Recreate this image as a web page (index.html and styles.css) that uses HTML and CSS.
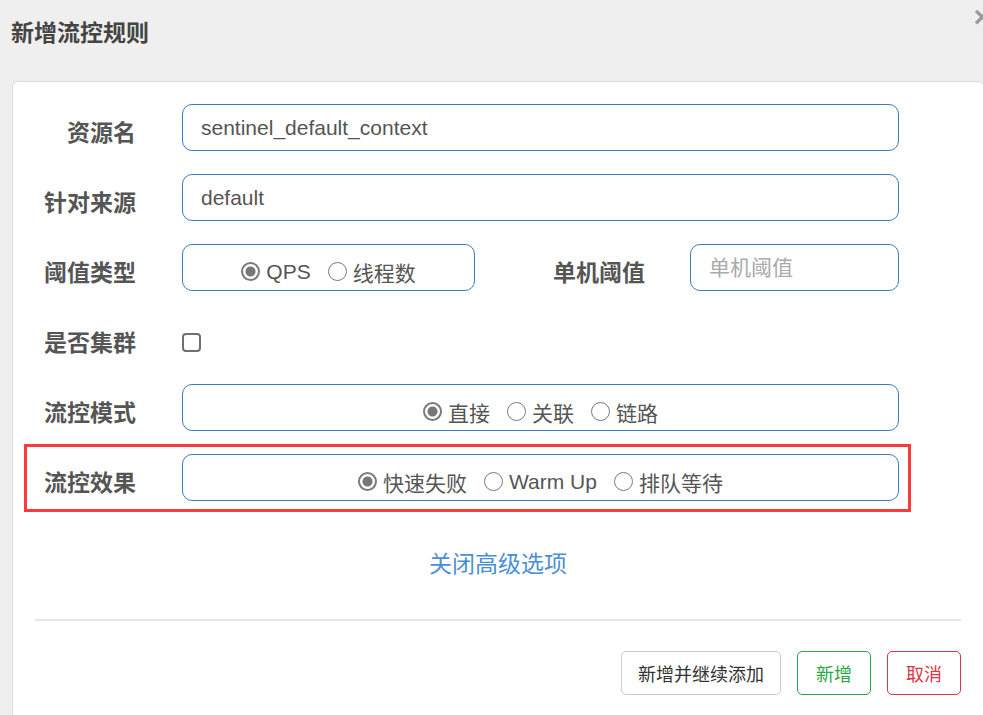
FILE: index.html
```html
<!DOCTYPE html>
<html lang="zh-CN">
<head>
<meta charset="utf-8">
<title>新增流控规则</title>
<link rel="stylesheet" href="styles.css">
</head>
<body>
<div class="modal">
  <div class="modal-header">
    <h4 class="modal-title">新增流控规则</h4>
    <span class="close">×</span>
  </div>
  <div class="card">
    <form class="form">
      <div class="row">
        <label class="label">资源名</label>
        <input class="input" type="text" value="sentinel_default_context">
      </div>
      <div class="row">
        <label class="label">针对来源</label>
        <input class="input" type="text" value="default">
      </div>
      <div class="row">
        <label class="label">阈值类型</label>
        <div class="split">
          <div class="radio-box">
            <label class="radio"><input type="radio" name="grade" checked><span>QPS</span></label>
            <label class="radio"><input type="radio" name="grade"><span>线程数</span></label>
          </div>
          <label class="label">单机阈值</label>
          <input class="input" type="text" placeholder="单机阈值">
        </div>
      </div>
      <div class="row">
        <label class="label">是否集群</label>
        <div class="check-wrap"><input class="checkbox" type="checkbox"></div>
      </div>
      <div class="row">
        <label class="label">流控模式</label>
        <div class="radio-box">
          <label class="radio"><input type="radio" name="strategy" checked><span>直接</span></label>
          <label class="radio"><input type="radio" name="strategy"><span>关联</span></label>
          <label class="radio"><input type="radio" name="strategy"><span>链路</span></label>
        </div>
      </div>
      <div class="row row-highlight">
        <label class="label">流控效果</label>
        <div class="radio-box">
          <label class="radio"><input type="radio" name="behavior" checked><span>快速失败</span></label>
          <label class="radio"><input type="radio" name="behavior"><span>Warm Up</span></label>
          <label class="radio"><input type="radio" name="behavior"><span>排队等待</span></label>
        </div>
      </div>
    </form>
    <div class="advanced"><a class="link">关闭高级选项</a></div>
    <hr class="divider">
    <div class="footer">
      <button class="btn btn-default" type="button">新增并继续添加</button>
      <button class="btn btn-success" type="button">新增</button>
      <button class="btn btn-danger" type="button">取消</button>
    </div>
  </div>
</div>
</body>
</html>
```
FILE: styles.css
```css
html, body {
  margin: 0;
  padding: 0;
  height: 100%;
  overflow: hidden;
}
body {
  background: #efefef;
  font-family: "Liberation Sans", "Noto Sans CJK SC", sans-serif;
  color: #555;
}
.modal {
  width: 983px;
}
.modal-header {
  height: 81px;
  display: flex;
  justify-content: space-between;
  align-items: flex-start;
  padding-left: 11px;
  box-sizing: border-box;
}
.modal-title {
  margin: 17px 0 0 0;
  font-size: 23px;
  line-height: 32px;
  font-weight: bold;
  color: #444;
}
.close {
  margin-top: 2px;
  margin-right: -8px;
  font-size: 30px;
  line-height: 30px;
  font-weight: bold;
  color: #9a9a9a;
}
.card {
  margin-left: 12px;
  width: 926px;
  padding: 22px 22px 40px 22px;
  background: #fff;
  border: 1px solid #dcdcdc;
  border-radius: 6px 6px 0 0;
}
.form {
  display: flex;
  flex-direction: column;
  gap: 23px;
  margin: 0;
}
.row {
  display: grid;
  grid-template-columns: 101px 717px;
  column-gap: 46px;
  height: 47px;
  align-items: center;
}
.label {
  text-align: right;
  font-size: 23px;
  font-weight: bold;
  color: #555;
  padding-top: 6px;
  white-space: nowrap;
}
.input {
  box-sizing: border-box;
  width: 100%;
  height: 47px;
  border: 1px solid #3a7cbd;
  border-radius: 10px;
  padding: 0 18px;
  font-family: "Liberation Sans", "Noto Sans CJK SC", sans-serif;
  font-size: 21px;
  color: #555;
  background: #fff;
  outline: none;
}
.input::placeholder {
  color: #aaa;
}
.split {
  display: grid;
  grid-template-columns: 293px 170px 254px;
  align-items: center;
}
.split .input {
  margin-left: 45px;
  width: 209px;
}
.radio-box {
  box-sizing: border-box;
  height: 47px;
  border: 1px solid #3a7cbd;
  border-radius: 10px;
  display: flex;
  justify-content: center;
  align-items: center;
  gap: 17px;
  padding-top: 8px;
}
.radio {
  display: flex;
  align-items: center;
  gap: 6px;
  font-size: 21px;
  color: #555;
}
.radio input {
  appearance: none;
  -webkit-appearance: none;
  margin: 0;
  width: 19px;
  height: 19px;
  border: 1.5px solid #7a7a7a;
  border-radius: 50%;
  background: #fff;
  box-sizing: border-box;
}
.radio input:checked {
  background: radial-gradient(circle, #777 0, #777 4.5px, #fff 5.5px);
  border-width: 2px;
}
.check-wrap {
  align-self: start;
  padding-top: 19px;
  height: 19px;
}
.checkbox {
  appearance: none;
  -webkit-appearance: none;
  display: block;
  margin: 0;
  width: 19px;
  height: 19px;
  border: 2px solid #6f6f6f;
  border-radius: 4px;
  box-sizing: border-box;
  background: #fff;
}
.row-highlight {
  align-self: flex-start;
  border: 3px solid #fb3b3b;
  margin: -10px 0 -11px -11px;
  padding: 7px 9px 8px 8px;
}
.advanced {
  margin-top: 47px;
  text-align: center;
  line-height: 32px;
  height: 32px;
}
.link {
  font-size: 23px;
  color: #4a8fd6;
  cursor: pointer;
}
.divider {
  margin: 39px 0 0 0;
  border: 0;
  height: 2px;
  background: #e5e5e5;
}
.footer {
  margin-top: 30px;
  display: flex;
  justify-content: flex-end;
  gap: 16px;
}
.btn {
  height: 44px;
  padding: 0 18px;
  border-radius: 5px;
  background: #fff;
  font-family: "Liberation Sans", "Noto Sans CJK SC", sans-serif;
  font-size: 18px;
  border: 1px solid #ccc;
  color: #333;
}
.btn-default {
  padding: 0 16px;
}
.btn-success {
  border-color: #28a745;
  color: #28a745;
}
.btn-danger {
  border-color: #dc3545;
  color: #dc3545;
}
```
